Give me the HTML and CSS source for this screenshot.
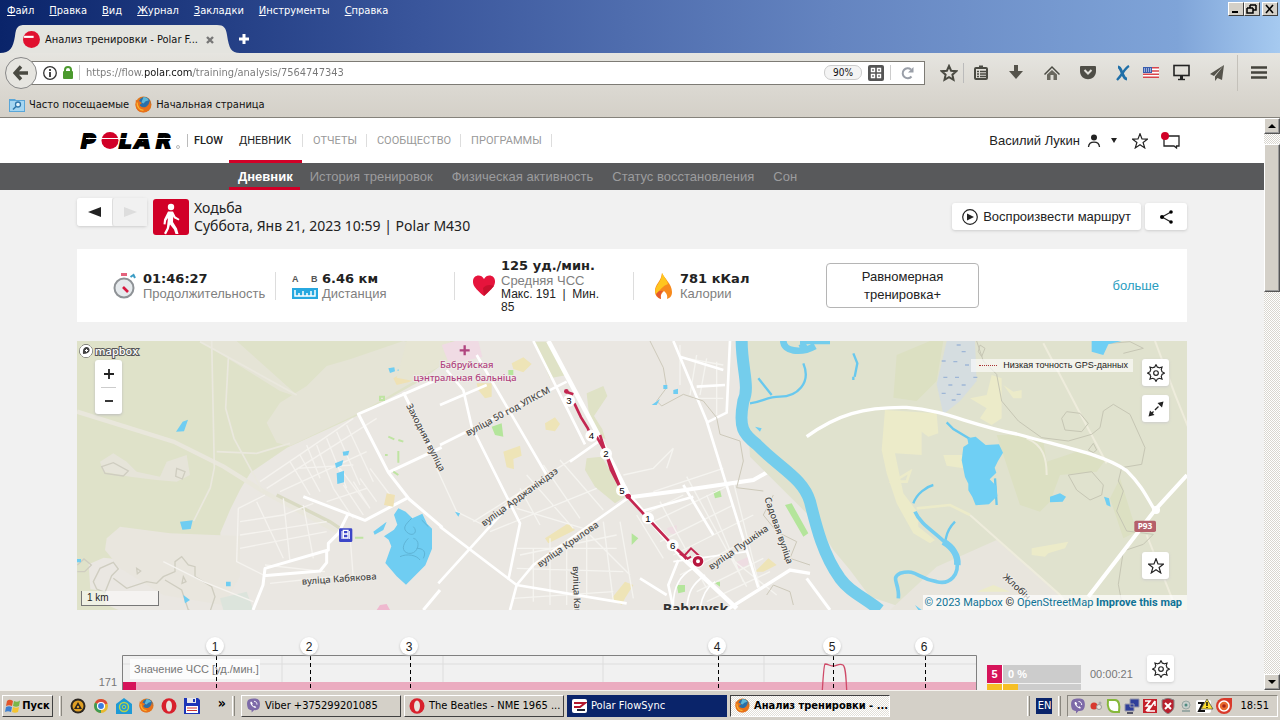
FILE: index.html
```html
<!DOCTYPE html>
<html lang="ru">
<head>
    <meta charset="UTF-8">
    <meta name="viewport" content="width=device-width, initial-scale=1.0">
    <title>Анализ тренировки - Polar Flow</title>
    <link rel="stylesheet" href="styles.css">
</head>
<body>
    <!-- icons used more than once -->
    <svg class="defs" aria-hidden="true">
        <symbol id="i-star" viewBox="0 0 16 16"><path d="M8 .8l2 5.2 5.4.1-4.3 3.4 1.6 5.4L8 11.8l-4.7 3.1 1.6-5.4L.6 6.1 6 6z" fill="none" stroke="currentColor" stroke-width="1.2"/></symbol>
        <symbol id="i-gear" viewBox="0 0 20 20"><path d="M10 .8l1.500 2.700c1 .1 1.500.3 2.200.8l3-.9-.9 3c.5.700.7 1.200.8 2.200l2.700 1.500-2.700 1.500c-.1 1-.3 1.500-.8 2.200l.9 3-3-.9c-.7.5-1.200.7-2.200.8L10 19.300l-1.500-2.600c-1-.1-1.500-.3-2.200-.8l-3 .9.9-3c-.5-.7-.7-1.200-.8-2.200L.7 10.100l2.700-1.500c.1-1 .3-1.500.8-2.200l-.9-3 3 .9c.7-.5 1.200-.7 2.200-.8z" fill="none" stroke="currentColor" stroke-width="1.300"/><circle cx="10" cy="10.100" r="2.600" fill="none" stroke="currentColor" stroke-width="1.300"/></symbol>
        <symbol id="i-firefox" viewBox="0 0 16 16"><circle cx="8" cy="8" r="7.500" fill="#e0761a"/><circle cx="9" cy="6.500" r="5.500" fill="#2a6fa8"/><path d="M8 1c2 0 4 1 5 3l-3 1-2 2-2-1z" fill="#5fb8d8"/><path d="M.8 3.500c1 1 2 1 3.200 1.500 1 .3 2.500 1 2 2.500-1 0-2 1-1 2 1.500 1.500 4 1.500 5.500.5 2-1 3-3 3-5.500 3 4-.5 10.500-5.500 10.800C3 15.500.500 12 .500 8z" fill="#e8701a"/><path d="M2 6c0 5 3 7 6 7.500" fill="none" stroke="#fbb52c" stroke-width="1.200"/></symbol>
        <symbol id="i-opera" viewBox="0 0 16 16"><ellipse cx="8" cy="8" rx="7.500" ry="7.800" fill="#d8202c"/><ellipse cx="8" cy="8" rx="3" ry="5.600" fill="#e8e4de"/></symbol>
        <symbol id="i-viber" viewBox="0 0 16 16"><path d="M3 1.500c3-1.300 8-1.300 10 0 2.500 1.500 2.500 8.500 0 10.500-1 .8-3 1-4.500 1L6 15.500V13c-2-.2-3.500-.8-4-2C.800 8 .500 3 3 1.500z" fill="#7d6aa8"/><path d="M5 4c-1 1 0 3 1.500 4.500S10 11 11 10l-1.500-1.700-1 .7C7.500 8.500 7 7.500 6.500 6.700l.7-.9L6 4z" fill="#fff"/><path d="M8.500 3.500c2 0 3.200 1.500 3.200 3.500" fill="none" stroke="#fff"/></symbol>
    </svg>

    <header class="browser">
        <div class="titlebar">
            <nav class="menubar">
                <button><u>Ф</u>айл</button>
                <button><u>П</u>равка</button>
                <button><u>В</u>ид</button>
                <button><u>Ж</u>урнал</button>
                <button><u>З</u>акладки</button>
                <button><u>И</u>нструменты</button>
                <button><u>С</u>правка</button>
            </nav>
            <div class="winbuttons">
                <button aria-label="Свернуть"><svg width="12" height="10"><path d="M2 8h6" stroke="#000" stroke-width="2"/></svg></button>
                <button aria-label="Восстановить"><svg width="12" height="10"><path d="M4 1h6M4 1v3M10 1v5H7M1 4h6M1 4v5h6V4" fill="none" stroke="#000" stroke-width="1.500"/></svg></button>
                <button class="win-close" aria-label="Закрыть"><svg width="12" height="10"><path d="M2 1l7 8M9 1L2 9" stroke="#000" stroke-width="1.600"/></svg></button>
            </div>
        </div>
        <div class="tabs">
            <div class="tab">
                <svg class="tab-bg" viewBox="0 0 240 29" width="240" height="29"><path d="M0 29C10 29 13 24 15 12 16 3 18 1 25 1h192c7 0 9 3 10 10 2 13 4 18 13 18z" fill="#e4e4df"/></svg>
                <svg width="17" height="17" viewBox="0 0 16 16"><circle cx="8" cy="8" r="8" fill="#e0102f"/><path d="M1 5.500h9" stroke="#fff" stroke-width="2"/></svg>
                <span class="tab-title">Анализ тренировки - Polar F...</span>
                <button aria-label="Закрыть вкладку"><svg width="8" height="8"><path d="M1 1l6 6M7 1L1 7" stroke="#777" stroke-width="2.400"/></svg></button>
            </div>
            <button class="newtab" aria-label="Новая вкладка"><svg width="12" height="12"><path d="M6 1v10M1 6h10" stroke="#fff" stroke-width="3"/></svg></button>
        </div>
        <div class="toolbar">
            <button class="back" aria-label="Назад"><svg width="16" height="16"><path d="M8 1.500L2 8l6 6.500M2.500 8H15" fill="none" stroke="#4a4a42" stroke-width="3.400"/></svg></button>
            <div class="urlbar">
                <svg width="14" height="14"><circle cx="7" cy="7" r="6.300" fill="none" stroke="#333" stroke-width="1.300"/><path d="M7 6v5M7 3v2" stroke="#333" stroke-width="1.800"/></svg>
                <svg width="10" height="13"><path d="M2 6V4c0-4 6-4 6 0v2" fill="none" stroke="#4c9a2e" stroke-width="2"/><rect y="5" width="10" height="8" rx="1" fill="#4c9a2e"/></svg>
                <i class="vline"></i>
                <input type="text" aria-label="Адрес" value="https://flow.polar.com/training/analysis/7564747343">
                <span class="zoom">90%</span>
                <svg width="16" height="16"><rect width="16" height="16" rx="2" fill="#555"/><path d="M3.500 3.500h3v3h-3zM9.500 3.500h3v3h-3zM3.500 9.500h3v3h-3zM9.500 9.500h3v3h-3z" fill="none" stroke="#fff" stroke-width="1.400"/></svg>
                <i class="vline"></i>
                <svg class="reload" width="14" height="14"><path d="M10.500 10.500A5 5 0 1 1 10 3.500" fill="none" stroke="#9a9fa8" stroke-width="2"/><path d="M7 6.500h5.500V1z" fill="#9a9fa8"/></svg>
            </div>
            <div class="tools">
                <button class="t-star" aria-label="Добавить в закладки"><svg width="18" height="18" viewBox="0 0 18 18"><path d="M9 2l2.100 4.700 5.100.5-3.800 3.500 1.100 5.100L9 13.200l-4.500 2.600 1.100-5.100L1.800 7.200l5.100-.5z" fill="none" stroke="#4a4a42" stroke-width="2"/></svg></button>
                <button aria-label="Закладки"><svg width="14" height="16"><rect x="1" y="3" width="12" height="11" rx="1" fill="none" stroke="#4a4a42" stroke-width="2"/><path d="M5 1.500h4" stroke="#4a4a42" stroke-width="2"/><path d="M3 6.500h2M6 6.500h6M3 9h2M6 9h6M3 11.500h2M6 11.500h6" stroke="#4a4a42" stroke-width="1.500"/></svg></button>
                <button aria-label="Загрузки"><svg width="14" height="15"><path d="M5 0h4v6h5l-7 8-7-8h5z" fill="#55534b"/></svg></button>
                <button aria-label="Домой"><svg width="16" height="16"><path d="M0 9L8 1l8 8-1 1-7-7-7 7z" fill="#4a4a42"/><path d="M3 9.500L8 5l5 4.500V15H9.500v-5h-3v5H3z" fill="#6a685f"/></svg></button>
                <button aria-label="Pocket"><svg width="16" height="15"><path d="M1 1h14q1 0 1 1v4c0 11-16 11-16 0V2q0-1 1-1z" fill="#4f4e47"/><path d="M4.500 5L8 8.500 11.500 5" fill="none" stroke="#e2e0da" stroke-width="2"/></svg></button>
                <button class="t-x" aria-label="Дополнение"><svg width="14" height="16"><path d="M2 2c4 0 4 12 9 12" fill="none" stroke="#1f6fa8" stroke-width="3"/><path d="M13 1C9 3 6 10 1 15" fill="none" stroke="#1f6fa8" stroke-width="2.400"/></svg></button>
                <button class="t-flag" aria-label="Язык"><svg width="16" height="11"><rect width="16" height="11" fill="#fff"/><path d="M0 .8h16M0 4h16M0 7.200h16M0 10.300h16" stroke="#d8454c" stroke-width="1.500"/><rect width="9" height="6" fill="#3a5dae"/><path d="M1 2h7M1 4h7" stroke="#fff" stroke-dasharray="1 1"/></svg></button>
                <button class="t-screen" aria-label="Экран"><svg width="17" height="17"><rect x="1" y="1.500" width="15" height="10" fill="none" stroke="#222" stroke-width="1.600"/><path d="M8.500 12v3" stroke="#222" stroke-width="3"/><path d="M5 15.500h7" stroke="#222" stroke-width="1.400"/></svg></button>
                <button class="t-send" aria-label="Отправить"><svg width="14" height="16"><path d="M14 0L0 9l4 2zM14 0L5 11.500V16l2.500-3 4.500 2z" fill="#55534b"/></svg></button>
                <button class="t-menu" aria-label="Меню"><svg width="16" height="13"><path d="M0 1.500h16M0 6.500h16M0 11.500h16" stroke="#44433c" stroke-width="2.600"/></svg></button>
            </div>
        </div>
        <div class="bookmarks">
            <a href="#"><svg width="16" height="14"><path d="M0 1h6l1 1h9v12H0z" fill="#5aa6d8"/><rect x="1" y="3" width="14" height="10" fill="#a5d6f2"/><circle cx="9" cy="6.500" r="2.500" fill="#e4f4fc" stroke="#2f77ac" stroke-width="1.300"/><path d="M7 8.500l-3 3" stroke="#2f77ac" stroke-width="1.600"/></svg>Часто посещаемые</a>
            <a href="#"><svg width="17" height="17"><use href="#i-firefox"/></svg>Начальная страница</a>
        </div>
    </header>

    <div class="viewport">
        <main class="page">
            <div class="site-header">
                <div class="wrap">
                    <a class="logo" href="#" aria-label="Polar">
                        <svg width="102" height="28" viewBox="0 0 102 28">
                            <g class="logo-text"><text x="1" y="21">P</text><text x="39" y="21">L</text><text x="55" y="21">A</text><text x="76" y="21">R</text></g>
                            <circle cx="30" cy="13.500" r="8.500" fill="#d10027"/>
                            <path d="M6 11.500h89" stroke="#fff" stroke-width="1"/>
                            <circle cx="98" cy="20" r="1.500" fill="none" stroke="#999" stroke-width=".7"/>
                        </svg>
                    </a>
                    <a class="flow" href="#">FLOW</a>
                    <nav class="main-nav">
                        <a class="active" href="#">ДНЕВНИК</a>
                        <a href="#">ОТЧЕТЫ</a>
                        <a href="#">СООБЩЕСТВО</a>
                        <a href="#">ПРОГРАММЫ</a>
                    </nav>
                    <div class="user">
                        <a href="#">Василий Лукин</a>
                        <svg width="14" height="14"><circle cx="7" cy="3.500" r="3" fill="#222"/><path d="M1.500 13c.5-6.500 10.500-6.500 11 0" fill="none" stroke="#222" stroke-width="1.300"/></svg>
                        <svg class="caret" width="6" height="5"><path d="M0 0h6L3 5z" fill="#222"/></svg>
                        <svg class="fav" width="16" height="16"><use href="#i-star"/></svg>
                        <svg width="19" height="18"><path d="M3 4h15v10h-2.500v2L13 14H3z" fill="none" stroke="#222" stroke-width="1.300"/><circle cx="4" cy="4" r="4" fill="#d10027"/></svg>
                    </div>
                </div>
            </div>
            <nav class="sub-nav">
                <div class="wrap">
                    <a class="active" href="#">Дневник</a>
                    <a href="#">История тренировок</a>
                    <a href="#">Физическая активность</a>
                    <a href="#">Статус восстановления</a>
                    <a href="#">Сон</a>
                </div>
            </nav>

            <div class="wrap session-head">
                <div class="pager">
                    <button aria-label="Назад"><svg width="13" height="10"><path d="M13 0v10L0 5z" fill="#222"/></svg></button>
                    <button class="off" aria-label="Вперед" disabled><svg width="13" height="10"><path d="M0 0v10l13-5z" fill="#ddd"/></svg></button>
                </div>
                <svg class="sport" width="36" height="36"><rect width="36" height="36" rx="3" fill="#d10027"/><circle cx="18" cy="8" r="3.200" fill="#fff"/><path d="M15 12.500h5l2.500 5 4 2.500-.8 1.600-4.700-2.400-.8-1.600-.2 5.400 4 6.500 1.500 5.500h-3l-1.500-4.500-4-5-1.200 4.500-2.800 5.500-2-1.200 2.800-5.300L15 19l-1.800 2.500-.7 4-2-.3.500-4.700z" fill="#fff"/></svg>
                <div class="session-title">
                    <div>Ходьба</div>
                    <div>Суббота, Янв 21, 2023 10:59 | Polar M430</div>
                </div>
                <div class="actions">
                    <button><svg width="16" height="16"><circle cx="8" cy="8" r="7.300" fill="none" stroke="#222" stroke-width="1.200"/><path d="M5 4.500v7L12 8z" fill="#222"/></svg>Воспроизвести маршрут</button>
                    <button class="share" aria-label="Поделиться"><svg width="15" height="14"><path d="M12 2L3 7l9 5" fill="none" stroke="#222" stroke-width="1.200"/><circle cx="12" cy="2" r="1.800"/><circle cx="3" cy="7" r="2"/><circle cx="12" cy="12" r="1.800"/></svg></button>
                </div>
            </div>

            <section class="wrap summary">
                <div class="stat">
                    <svg width="26" height="28" viewBox="0 0 26 28"><path d="M8 1h6v3H8z" fill="#e4627c"/><path d="M17.500 5l3-2 1.500 3" fill="none" stroke="#3a9cc4" stroke-width="2"/><circle cx="11" cy="16" r="9.500" fill="#e6eaed" stroke="#8e9296" stroke-width="2"/><path d="M10 15l5 5" stroke="#d8173f" stroke-width="2.600"/></svg>
                    <div><strong>01:46:27</strong><span>Продолжительность</span></div>
                </div>
                <div class="stat">
                    <svg width="26" height="28" viewBox="0 0 26 28"><text class="ab" x="0" y="10">A</text><text class="ab" x="19" y="10">B</text><rect y="16" width="26" height="11" fill="#27a8e0"/><path d="M3 18v6h20v-6M7 24v-3M11 24v-5M15 24v-3M19 24v-5" fill="none" stroke="#fff" stroke-width="1.500"/></svg>
                    <div><strong>6.46 км</strong><span>Дистанция</span></div>
                </div>
                <div class="stat">
                    <svg width="26" height="28" viewBox="0 0 26 28"><path d="M13 24C2 15 2 12 2 9c0-6 8-8 11-2 3-6 11-4 11 2 0 3 0 6-11 15z" fill="#e6143c"/><path d="M13 24l10-10c-5-2-8-1-11 2z" fill="#c8102e"/></svg>
                    <div><strong>125 уд./мин.</strong><span>Средняя ЧСС</span><em>Макс. 191 &nbsp;|&nbsp; Мин. 85</em></div>
                </div>
                <div class="stat">
                    <svg width="26" height="28" viewBox="0 0 26 28"><path d="M12 1c2 5 10 11 10 19 0 4-2 6-5 7 1-4-1-6-3-8-2 2-4 4-3 8-4-1-6-4-6-8 0-7 6-9 7-18z" fill="#f78a1d"/><path d="M12 1c2 4 5 7 6 11-5 2-9 6-12 11-3-9 6-12 6-22z" fill="#ffc61e"/><path d="M6 22c2-3 5-4 7-3-2 2-3 4-2 8-2-1-4-2-5-5z" fill="#e4572e"/></svg>
                    <div><strong>781 кКал</strong><span>Калории</span></div>
                </div>
                <button class="benefit">Равномерная тренировка+</button>
                <a class="more" href="#">больше</a>
            </section>

            <section class="wrap map">
                <svg class="map-canvas" viewBox="21 18 3330 807" preserveAspectRatio="xMidYMid slice">
                    <rect x="21" y="18" width="3330" height="807" fill="#eae7e2"/>
                    <!-- west: woods and suburbs -->
                    <g>
                        <path d="M21 18h1180l-70 60-80 60-180 100-220 100-110 75-30 50-30 60-30 70v80l-200 10-150-15-45 20 5 75 45 5v40l300 130 80 15H21z" fill="#dfe2c9"/>
                        <path d="M1000 18l110 30-60 80-180 105-210 100-40-10-30-60 40-60 80-50 60-60 70-20zM390 18h110l190 170-60-20z" fill="#e5e4d6"/>
                        <path d="M90 380l40-25 40 25 30 30 70 15 20-45 60-20 10 60-40 20-60-5-80-10-80-15z" fill="#e6e4d9"/>
                        <path d="M110 610l40-35 150 20 210 8v120L460 810 280 780l-130-80-45-55z" fill="#e9e6de"/>
                        <path d="M450 790l80-20 20 55H460z" fill="#dce4dc"/>
                        <path d="M21 230l290 90 150 75 120 75 220 120" fill="none" stroke="#e9e7dc" stroke-width="13"/>
                        <path d="M425 18l8 380-12 60-50 100M475 70l-8 150 25 90 65 120 20 40M390 20l290 160M440 350l120 5 100-30" fill="none" stroke="#eae8de" stroke-width="5"/>
                        <path d="M620 480l160 80 30 20" fill="none" stroke="#d9dac3" stroke-width="10"/>
                        <path d="M95 395l35-12 45 25-15 15-55-8zM320 400l25 10-8 22-20-8zM70 740l20-40 40-18 15 20-20 20-20 50-25-10zM130 730l40 30 60-20 30 5 20-20 35-15v-30l20-15 20 25 20 5v30l50 30 10 30-20 60-60-20-20-60-50-30M22 690l20-18 22 18-20 20-22 0M200 700l12 8-10 8zM340 725l8 15-12 5z" fill="none" stroke="#cfcdc0" stroke-width="4"/>
                        <g fill="none" stroke="#f5f3ef" stroke-width="4">
                            <path d="M505 520l-5 160 80 40M510 560l130-20 90-35M510 600l260-40M510 640l260-50M640 490l20 190M560 500l80 170M700 510l30 160M585 690l180 20M600 745l240-25M840 600l10 130M505 520l80-40"/>
                            <path d="M570 440l280-190M590 460l330-210M630 470l260-120M740 330l50 130M770 310l60 150M800 290l70 160M830 270l80 170M690 360l60 110M790 460l60 90M820 450l60 90M850 440l50 80M870 430l50 70M900 400l60 80M770 500l120-40M680 400l170-10M900 520l-90-120M660 380l60 100M710 330l40 100"/>
                            <path d="M280 680l120 60 150 60"/>
                        </g>
                        <path d="M1110 130L865 237l90 175 62 80 100 85M1010 490L885 556 700 485M955 412l160-75M835 535l-30 60-30 30v20l-190 55-6 50-30 75M580 722l170-14 20-25v-40M1000 172l90 180M1060 825l50-60" fill="none" stroke="#fff" stroke-width="9" stroke-linejoin="round"/>
                        <path d="M970 130l50-30 50-20 10 20-60 40-40 10zM950 475l25 5-5 35-28-5z" fill="#efe1b4"/>
                        <path d="M930 185h12v10h-12zM955 305l18 8M985 315l15 5M945 360h8M985 348v35M970 410l15 10M855 608h25" fill="none" stroke="#bfe4a2" stroke-width="6"/>
                        <path d="M955 100l18-3 2 12-15 5zM980 105l25-5-10 12zM318 290l20-30 16-6-12 35zM330 560l38-4-6 26-25 2zM818 350l20-3-4 14-14 1zM795 385l25-10-4 16-18 8zM800 415l22-8v35l-20 5zM910 590l40-30-10 25-26 14zM468 740h14v14h-14zM340 780l20 15-15 10zM21 672h12v10H21z" fill="#6fcdf2"/>
                        <path d="M985 520l22 10 20 20 30-14 14 30 15 15v60l-20 50-58 58-28-25-34-40 18-50-8-20-14-10 30-20 10-15-10-30z" fill="#6fcdf2"/>
                        <path d="M1025 550c-20 20-30 30-10 45 15 10 30-5 15-20M1015 610c-20 20-20 40 0 45 30 5 40-40 15-45M990 665c20-10 50-5 60 10M1040 640c20 0 30 10 20 30M1055 555l20 20" fill="none" stroke="#5fb4d6" stroke-width="3"/>
                        <rect x="807" y="580" width="40" height="41" rx="4" fill="#3c46c8"/>
                        <path d="M816 588v24M838 588v24" stroke="#fff" stroke-width="3"/><path d="M820 586h14v23h-14zM822 597h12" fill="none" stroke="#fff" stroke-width="4"/>
                    </g>
                    <!-- town -->
                    <g transform="translate(1110 0)">
                        <path d="M-100 18h130l20 50-40 20-90 50-50-10z" fill="#e6e5d3"/>
                        <path d="M5 30l40-12 70 0 12 48-100 20z" fill="#f0dbe4"/>
                        <path d="M440 175l50-22 12 30-40 60 25 40 10 30-30-15-20-60zM440 370l45-5 30 50 40 70-30 20-60-50-30-50zM280 20h50l50 100-50 10z" fill="#dfe2c6"/>
                        <path d="M215 85l35-18 25 20-25 25-30-10zM110 145l45 0v40l-20 5-20-25zM315 265l30-18 15 20-15 22-28-5zM190 350l50-18 5 30-25 10 2 30-22-5zM315 610l70-45 20 20-80 40zM515 790l40-50 25 10-25 40-10 20zM945 710l40-40 25 20-40 20z" fill="#eee4b7"/>
                        <path d="M155 275l30-10 5 40-25-5zM205 105h15v15h-15zM575 595l20 15-20 20zM820 740l20 0v15zM710 750l25 0v20l-20 5zM1035 510l20-5 50 90-15 10zM820 470l20-5 5 20-20 5z" fill="#b4e59b"/>
                        <path d="M890 680l35-15v25l-30 10zM680 580l30-10v30l-20-5z" fill="#eedde2"/>
                        <g fill="none" stroke="#f5f4f0" stroke-width="4">
                            <path d="M100 560l300-190M150 590l320-130M260 420l140 160M310 390l110 160M360 375l130 150M230 520l200 60M160 540l80-70M240 460l60 110M240 660l290-60M230 700l320 10M230 640l300 0M280 640v160M330 610v200M380 640v170M440 590v200M490 560l30 240M540 560l40 230M220 790l300-20M450 600l120 120M590 540l80 130M-10 400l60 130 80 40"/>
                            <path d="M700 340l-60 60-90 20M700 340l-20 60M610 540l120-60M640 470l210-70M740 425l180 330M660 500l140 260M800 480l110 260M880 440l80 320M640 560l230-110M660 620l220-110M700 660l240-120M720 720l230-120M770 770l200-100M800 800l190-90M860 660l150 120M720 30v120M770 60l-20 120M800 70l-20 110M830 80v160M760 190h90M740 70l110 20"/>
                        </g>
                        <path d="M760 700c-40 20-60 60-60 110M795 720c-40 30-50 50-55 100M825 740c-30 20-40 50-45 80M700 680l220-30" fill="none" stroke="#fff" stroke-width="5"/>
                        <g fill="none" stroke="#fff" stroke-width="8" stroke-linejoin="round">
                            <path d="M140 150L0 210M0 330l340-170 40-20M20 105l50 60 25 110 145 290-35 170M110 60l210 360M280 18l155 310M0 575l230 175 330 55M210 825l20-75 50-60 290-205M390 380l85-60M-5 745L240 475M700 18l100 240 155 500M870 18l-10 215-60 30M600 530l160-45M730 450l90 150M600 730l80 50M700 820l-15-70 30-75M720 65l130 40M770 155l85-5"/>
                        </g>
                        <path d="M325 18L475 300l90 180 165 190 160 150" fill="none" stroke="#fff" stroke-width="14"/>
                        <path d="M570 487l150-20 220-32 80-45 90-75" fill="none" stroke="#fff" stroke-width="12"/>
                        <path d="M860 825l190-120 60 10" fill="none" stroke="#fff" stroke-width="10"/>
                        <path d="M630 18l40 80 10 60-30 40 15 15 65-35 60 20 40 50 10 50 60 20 10 60-20 80 80 10M1000 480l-30 60 40 50 60 30-20 50 60 20M980 780l20-30 50 20 10 40" fill="none" stroke="#cdc9ba" stroke-width="3"/>
                        <path d="M635 210l25-18-10 18zM670 150h12v12h-12zM700 165l14-4v16h-14zM45 530l15 5-5 10z" fill="#6fcdf2"/>
                    </g>
                    <!-- river and east bank -->
                    <g transform="translate(2220 0)">
                        <path d="M-200 18h1331v807H300l-120-40-60-80-50-60-50-80-200-200z" fill="#e0e2ce"/>
                        <path d="M240 825l140-130 180-80 100 80 140 130z" fill="#e8e5dd"/>
                        <path d="M260 60l100-42h40l-20 120-60 60-70-10zM560 300l60 0 80 20 10 60 90-30 90 20-30 40-110 10-30 80-30 30-60-20-20-60zM930 430l-30 60 40 120 40-20z" fill="#dce0c2"/>
                        <path d="M410 18h85l5 120-50 60-50 40-20-90z" fill="#d5dde0"/>
                        <path d="M440 30h12M455 50h12M395 78h12M430 80h12M465 90h12M400 127h12M435 127h12M490 127h12M415 150h12M455 150h12M395 175h12M440 178h12M425 195h12" stroke="#9eb6d6" stroke-width="4"/>
                        <path d="M480 190l50-10 15-60 30 10v120l-30 20-35-20 20-30zM580 150l30 20 25-5v25h-25zM225 225l155 10 5 60-30 10-20-15v70l-80-5 25 120 45 60 0 40 50 40-15 10-50-30-50-90-30-90-15-70zM400 360l60 0v40l-50-8zM665 640l110-20-10 20-50 15-10 10-40-5zM500 770l50-20 50 20z" fill="#ecebc9"/>
                        <path d="M250 440l50-30-10 30zM320 520l100-10 60 30" fill="none" stroke="#ecebc9" stroke-width="8"/>
                        <path d="M480 540l270 240 30 50M650 310c50 20 60 60 60 110M700 25l110 210 80 150M1035 18l60 160 40 100M1010 600l80 200" fill="none" stroke="#eeecdc" stroke-width="6"/>
                        <path d="M500 18l20 60 40 40 15 80 50 60 70 50 80 10 70-20 25-20 10-50 30-20 50 30 45 100-10 50-60 10-10 40 15 30-20 60 30 60 80 10-30 30-60 20-15 100 15 80M755 250l15-20 40 5 25 30-20 25-50-5zM775 420l70-10 35 40-5 30-35 15-40-30zM835 345l15-20 10 20-10 8zM510 30l15 10-10 25-10-15zM900 25l60-5 40 20-60 15" fill="none" stroke="#c6c6b4" stroke-width="3"/>
                        <path d="M-205 18c0 80 25 140 5 180-15 80 0 100 40 130C-90 400-20 430 0 500c20 80 40 160 90 230 30 40 60 50 120 95" fill="none" stroke="#74cdec" stroke-width="36"/>
                        <path d="M-30 18h90M-80 18c0 30 50 40 95 15M-10 30l-20 10" fill="none" stroke="#74cdec" stroke-width="20"/>
                        <path d="M-20 85c25 60-20 100-70 100-40 0-50 15-90 20M-155 130l40 50M130 55l12 30-8 40M130 125v10M410 262l20 20 50 30M310 505c10-30 40-50 60-55M435 560c-30 30-25 50-30 60M555 430l5 80" fill="none" stroke="#68c8ee" stroke-width="7"/>
                        <path d="M315 530c20 50 100 80 125 140 10 50-20 80-60 70-60-10-60-40-110-25-30 15 0 30-5 75" fill="none" stroke="#74cdf0" stroke-width="11"/>
                        <path d="M400 620c25 15 45 40 42 70" fill="none" stroke="#74cdf0" stroke-width="20"/>
                        <path d="M472 310l25-5 30 25 40-2 12 25-15 25-10 20 5 15-20 20 20 20 3 30-25 25-40 3-10-25-12-20v-20l-10-20-10-50 5-40 15-10zM845 18h90l-40 10-15 32-35-10zM720 485l30-10 18 10-10 15-38 2zM882 485l15 5 5 25-12-5zM-165 275l20 5-5 10zM315 810l20 15h-10z" fill="#6fcff4"/>
                        <path d="M-10 305C80 240 160 215 290 217c120 10 180 50 330 80 140 40 260 60 330 110 50 50 60 80 85 120" fill="none" stroke="#fff" stroke-width="10"/>
                        <path d="M835 785l200-260 96-105" fill="none" stroke="#fff" stroke-width="12"/><circle cx="1038" cy="525" r="12" fill="#fff"/>
                        <path d="M-10 730l70 95" stroke="#fff" stroke-width="9"/>
                        <rect x="973" y="557" width="65" height="34" rx="5" fill="#b5606a"/><text class="badge" x="1005" y="583">Р93</text>
                    </g>
                    <!-- labels -->
                    <g class="labels">
                        <g class="poi"><text x="1190" y="98">Бабруйская</text><text x="1185" y="138">цэнтральная бальніца</text><path d="M1184 31v30M1169 46h30" stroke="#b0447f" stroke-width="7"/></g>
                        <text transform="translate(1193 304) rotate(-28)">вуліца 50 год УЛКСМ</text>
                        <text transform="translate(1008 212) rotate(63)">Заходняя вуліца</text>
                        <text transform="translate(696 749) rotate(-4)">вуліца Кабякова</text>
                        <text transform="translate(1242 575) rotate(-36)">вуліца Арджанікідзэ</text>
                        <text transform="translate(1410 698) rotate(-35)">вуліца Крылова</text>
                        <text transform="translate(1508 694) rotate(88)">вуліца Кам</text>
                        <text transform="translate(2083 490) rotate(71)">Садовая вуліца</text>
                        <text transform="translate(1924 706) rotate(-35)">вуліца Пушкіна</text>
                        <text transform="translate(2797 728) rotate(43)">Жлобін</text>
                        <text class="city" x="1778" y="838">Babruysk</text>
                    </g>
                    <path d="M920 825l10-15 20-3 10 18z" fill="#efb9cf"/>
                    <!-- route -->
                    <g transform="translate(1110 0)">
                        <path d="M378 170l22 8M403 205l20 42 20 32 12 28M470 305l28 50 15 50 32 62M480 300l18 55 47 112M545 467l20 20 60 65 75 80 40 40M735 665l-15-10" fill="none" stroke="#c32650" stroke-width="8"/>
                        <path d="M715 645l28 26 10-6M735 660l18-20 24 22" fill="none" stroke="#c32650" stroke-width="6"/>
                        <circle cx="379" cy="169" r="7" fill="#c32650"/><circle cx="565" cy="484" r="8" fill="#c32650"/>
                        <g fill="#fff"><circle cx="387" cy="197" r="18"/><circle cx="454" cy="302" r="18"/><circle cx="498" cy="356" r="18"/><circle cx="546" cy="466" r="18"/><circle cx="624" cy="550" r="18"/><circle cx="698" cy="631" r="18"/><circle cx="774" cy="679" r="19"/></g>
                        <circle cx="774" cy="679" r="11" fill="#fff" stroke="#b7173f" stroke-width="10"/>
                        <g class="pins"><text x="387" y="207">3</text><text x="454" y="312">4</text><text x="498" y="366">2</text><text x="546" y="476">5</text><text x="624" y="560">1</text><text x="698" y="641">6</text></g>
                    </g>
                </svg>
                <div class="mapbox">
                    <svg width="14" height="14"><circle cx="7" cy="7" r="6.300" fill="#fff" stroke="#444"/><path d="M4 10c-.5-5 1-7 4-7 4 1 4 7-4 7z" fill="#444"/><path d="M7.500 5v3M6 6.500h3" stroke="#fff"/></svg>
                    <span>mapbox</span>
                </div>
                <div class="zoomer">
                    <button aria-label="Приблизить"><svg width="10" height="10"><path d="M5 0v10M0 5h10" stroke="#222" stroke-width="1.800"/></svg></button>
                    <button aria-label="Отдалить"><svg width="10" height="10"><path d="M1 5h8" stroke="#222" stroke-width="1.800"/></svg></button>
                </div>
                <div class="scale">1 km</div>
                <div class="gps"><i></i>Низкая точность GPS-данных</div>
                <div class="map-tools">
                    <button aria-label="Настройки карты"><svg width="18" height="18"><use href="#i-gear"/></svg></button>
                    <button aria-label="Развернуть"><svg width="16" height="16"><path d="M2 14L14 2" stroke="#222" stroke-width="1.300" stroke-dasharray="5 2"/><path d="M15.500.5l-1.500 6L9.500 2zM.5 15.500l1.500-6L6.500 14z" fill="#222"/></svg></button>
                    <button class="last" aria-label="Избранное"><svg width="16" height="16"><use href="#i-star"/></svg></button>
                </div>
                <div class="attribution"><a href="#">© 2023 Mapbox</a> © <a href="#">OpenStreetMap</a> <a href="#"><b>Improve this map</b></a></div>
            </section>

            <section class="wrap chart">
                <div class="axis">171</div>
                <div class="plot">
                    <svg viewBox="0 0 855 60" preserveAspectRatio="xMinYMin slice">
                        <path d="M160 19v30M321 19v30M481 19v30M642 19v30M0 28h855" stroke="#ddd" fill="none"/>
                        <rect y="46" width="855" height="14" fill="#ebacc0"/>
                        <rect y="46" width="14" height="14" fill="#d6145a"/>
                        <path d="M700 60c1-18 2-31 3-32 4 0 4 2 8 2s6-3 10-1c3 2 3 14 4 31" fill="none" stroke="#cf4a68" stroke-width="1.300"/>
                        <rect x="8" y="23" width="130" height="20" fill="#fff" opacity=".8"/>
                        <path d="M.5 60V19.500h854V60" fill="none" stroke="#808080"/>
                        <text class="series" x="12" y="37">Значение ЧСС [уд./мин.]</text>
                        <path d="M94 20v40M188 20v40M288 20v40M596 20v40M711 20v40M803 20v40" transform="translate(.5)" stroke="#000" stroke-dasharray="4 3"/>
                        <g class="lap-bg"><circle cx="93" cy="10" r="9"/><circle cx="187" cy="10" r="9"/><circle cx="287" cy="10" r="9"/><circle cx="595" cy="10" r="9"/><circle cx="710" cy="10" r="9"/><circle cx="802" cy="10" r="9"/></g>
                        <g class="laps"><text x="93" y="15">1</text><text x="187" y="15">2</text><text x="287" y="15">3</text><text x="595" y="15">4</text><text x="710" y="15">5</text><text x="802" y="15">6</text></g>
                    </svg>
                </div>
                <div class="zones">
                    <div class="zone z5"><b>5</b><span>0 %</span></div>
                    <div class="zone z4"><b></b><span></span></div>
                </div>
                <div class="zone-time">00:00:21</div>
                <button class="chart-gear" aria-label="Настройки графика"><svg width="18" height="18"><use href="#i-gear"/></svg></button>
            </section>
        </main>
        <div class="scrollbar">
            <button aria-label="Вверх"><svg width="8" height="4"><path d="M0 4h8L4 0z"/></svg></button>
            <div class="track"><div class="thumb"></div></div>
            <button aria-label="Вниз"><svg width="8" height="4"><path d="M0 0h8L4 4z"/></svg></button>
        </div>
    </div>

    <footer class="taskbar">
        <button class="start"><svg width="16" height="15"><path d="M2 3c2-2 4-1 6 0L7 8C5 7 3 7 1 8z" fill="#e2552a"/><path d="M9 3c2 1 4 1 6-.500L14 8c-2 1-4 1-6 0z" fill="#7ab648"/><path d="M1 9c2-1 4-1 6 0l-1 5c-2-1-4-1-6 0z" fill="#3d7fd0"/><path d="M8 9c2 1 4 1 6 0l-1 5c-2 1-4 1-6 0z" fill="#f4c430"/></svg>Пуск</button>
        <i class="grip"></i>
        <div class="quick">
            <svg width="16" height="16"><circle cx="8" cy="8" r="7.500" fill="#2b2620"/><circle cx="8" cy="8" r="5.500" fill="#e0a024"/><path d="M8 4l4 7H4z" fill="#2b2620"/><circle cx="8" cy="9" r="1.200" fill="#e0a024"/></svg>
            <svg width="16" height="16"><circle cx="8" cy="8" r="7" fill="#e8b92e"/><path d="M8 8L2 4.500a7 7 0 0 1 12.500 1z" fill="#db4a3a"/><path d="M8 8v7A7 7 0 0 1 2 4.500z" fill="#3f9a54"/><circle cx="8" cy="8" r="3.500" fill="#3b7de0" stroke="#fff" stroke-width="1.200"/></svg>
            <svg width="16" height="16"><path d="M8 0l8 6v10H0V6z" fill="#1e9ad6"/><circle cx="8" cy="9" r="4.500" fill="none" stroke="#b9d24a" stroke-width="1.400"/><circle cx="8" cy="9" r="1.800" fill="none" stroke="#b9d24a"/></svg>
            <svg width="15" height="15"><use href="#i-firefox"/></svg>
            <svg width="16" height="16"><use href="#i-opera"/></svg>
            <svg width="16" height="16"><path d="M0 0h14l2 2v14H0z" fill="#1d35b8"/><path d="M3 0h9v5H3z" fill="#e6e6ea"/><path d="M9 1h2v3H9z" fill="#1d35b8"/><path d="M2 8h12v7H2z" fill="#fff"/><path d="M3 10h10M3 12.500h10" stroke="#c33"/></svg>
        </div>
        <span class="chevrons">»</span>
        <i class="grip"></i>
        <div class="tasks">
            <button><svg width="15" height="15"><use href="#i-viber"/></svg><span>Viber +375299201085</span></button>
            <button><svg width="16" height="16"><use href="#i-opera"/></svg><span>The Beatles - NME 1965 ...</span></button>
            <button class="blue"><svg width="15" height="14"><rect width="15" height="14" rx="2" fill="#fff"/><path d="M2 4h11L8 8H2" fill="none" stroke="#b3182e" stroke-width="2"/><path d="M5 11h8" stroke="#223" stroke-width="2"/></svg><span>Polar FlowSync</span></button>
            <button class="pressed"><svg width="15" height="15"><use href="#i-firefox"/></svg><span>Анализ тренировки - ...</span></button>
        </div>
        <i class="grip right"></i>
        <span class="lang">EN</span>
        <i class="grip"></i>
        <div class="tray">
            <svg width="16" height="16"><use href="#i-viber"/></svg>
            <svg width="16" height="16"><circle cx="6" cy="8" r="3.500" fill="#d83a30"/><circle cx="11" cy="9" r="2.500" fill="#e8e4de" stroke="#999"/><circle cx="12" cy="5" r="1.500" fill="#aaa"/></svg>
            <svg width="16" height="16"><path d="M2 2h7c4 0 5 5 4 12H8C3 14 1 9 2 2z" fill="#fff" stroke="#86b83a" stroke-width="2"/></svg>
            <svg width="16" height="16"><path d="M6 1h9v8H6zM1 6h9v7H1z" fill="#2f3f9a" stroke="#99a"/><path d="M3 15h6" stroke="#556" stroke-width="2"/></svg>
            <svg width="16" height="16"><rect x="1" y="1" width="14" height="14" fill="#c4202a"/><path d="M3 3h5L4 8h4l-4 5M13 3v5M13 3L6 13h7" fill="none" stroke="#fff" stroke-width="1.500"/></svg>
            <svg width="16" height="16"><path d="M8 0l6 2v6c0 4-3 6-6 8-3-2-6-4-6-8V2z" fill="#b8202e" stroke="#888"/><path d="M5 5l6 6M11 5l-6 6" stroke="#fff" stroke-width="2"/></svg>
            <svg width="16" height="16"><circle cx="8" cy="7" r="4" fill="#c8cfcc" stroke="#9aa8a4"/><circle cx="8" cy="7" r="1.500" fill="#4f8a80"/><path d="M4 13h8" stroke="#9aa8a4" stroke-width="2"/></svg>
            <svg width="18" height="16"><rect y="2" width="15" height="13" rx="2" fill="#fff"/><path d="M2 5h5l-4 8h6" fill="none" stroke="#111" stroke-width="2"/><path d="M11 1l6 10H5z" fill="#ffe02e" stroke="#554" stroke-width=".8"/><path d="M11 4v4M11 9v1" stroke="#000" stroke-width="1.400"/></svg>
            <svg width="16" height="16"><path d="M8 0h8v8a8 8 0 1 1-8-8z" fill="#d93a2b"/><circle cx="8" cy="8" r="5" fill="#e86a2c" stroke="#fff" stroke-width="1.600"/><circle cx="8" cy="8" r="1.800" fill="#a5251c"/></svg>
            <time>18:51</time>
        </div>
    </footer>
</body>
</html>
```
FILE: styles.css
```css
:root {
    --ui-font: "DejaVu Sans Condensed", "Noto Sans", sans-serif;
    --face: #d4d0c8;
    --red: #d10027;
}

* {
    box-sizing: border-box;
    margin: 0;
    padding: 0;
}

body {
    height: 100vh;
    display: flex;
    flex-direction: column;
    overflow: hidden;
    font: 13px "Liberation Sans", Arial, sans-serif;
    color: #222;
}

svg {
    flex: none;
    display: block;
}

button {
    background: none;
    border: none;
    font: inherit;
    color: inherit;
    cursor: pointer;
    display: flex;
    align-items: center;
    justify-content: center;
}

a {
    color: inherit;
    text-decoration: none;
}

.defs {
    position: absolute;
    width: 0;
    height: 0;
}

.wrap {
    width: calc(100% - 154px);
    margin: 0 auto;
}

/* browser chrome */
.browser {
    flex: none;
    font: 11px var(--ui-font);
    color: #111;
    background: linear-gradient(to right, #0a246a 0%, #3a569c 33%, #6484c0 65%, #7fa4d8 92%, #a6caf0 100%);
}

.titlebar {
    display: flex;
    justify-content: space-between;
    height: 24px;
}

.menubar {
    display: flex;
    gap: 15px;
    height: 20px;
    padding-left: 7px;
    color: #fff;
}

.winbuttons {
    display: flex;
    padding: 2px 2px 8px 0;
}

.winbuttons button {
    width: 16px;
    height: 14px;
    background: var(--face);
    border: 1px solid;
    border-color: #fff #404040 #404040 #fff;
}

.winbuttons .win-close {
    margin-left: 2px;
}

.tabs {
    display: flex;
    align-items: center;
    height: 29px;
}

.tab {
    position: relative;
    display: flex;
    align-items: center;
    gap: 5px;
    width: 238px;
    height: 29px;
    padding: 2px 0 0 23px;
}

.tab-bg {
    position: absolute;
    left: 0;
    top: 0;
}

.tab > :not(.tab-bg) {
    position: relative;
}

.tab-title {
    width: 156px;
    white-space: nowrap;
}

.newtab {
    width: 12px;
}

.toolbar {
    display: flex;
    align-items: center;
    height: 39px;
    padding-left: 5px;
    background: linear-gradient(#e6e5e0, #dad7d0);
}

.back {
    z-index: 1;
    width: 32px;
    height: 32px;
    border: 1px solid #888;
    border-radius: 50%;
    background: #e6e5e0;
}

.urlbar {
    flex: 1;
    display: flex;
    align-items: center;
    gap: 6px;
    height: 24px;
    margin-left: -8px;
    padding: 0 9px 0 13px;
    background: #fff;
    border: 1px solid #7d7b75;
}

.vline {
    width: 1px;
    height: 15px;
    background: #ccc;
}

.urlbar input {
    flex: 1;
    min-width: 0;
    border: none;
    outline: none;
    font: 11px var(--ui-font);
    color: transparent;
    background: linear-gradient(to right, #777 59px, #111 59px 107px, #777 107px);
    -webkit-background-clip: text;
    background-clip: text;
}

.zoom {
    width: 38px;
    line-height: 13px;
    font-size: 10px;
    text-align: center;
    border-radius: 7px;
    border: 1px solid #ccc;
    background: #f4f4f4;
}

.urlbar .reload {
    margin-left: 4px;
}

.tools {
    display: flex;
    align-items: center;
    padding-left: 9px;
}

.tools button {
    width: 36px;
    height: 36px;
}

.tools .t-star {
    width: 30px;
    height: 20px;
    border-right: 1px solid #bbb;
}

.tools .t-star + button {
    width: 34px;
}

.tools .t-x,
.tools .t-send {
    width: 34px;
}

.tools .t-flag {
    width: 22px;
}

.tools .t-screen {
    width: 38px;
}

.tools .t-menu {
    width: 43px;
    margin-left: 3px;
    border-left: 1px solid #c4c1ba;
}

.bookmarks {
    display: flex;
    align-items: center;
    gap: 6px;
    height: 26px;
    padding-left: 9px;
    background: linear-gradient(#dad7d0, var(--face));
    border-bottom: 1px solid #85827b;
}

.bookmarks a {
    display: flex;
    align-items: center;
    gap: 4px;
}

/* page */
.viewport {
    flex: 1;
    min-height: 0;
    display: flex;
}

.page {
    flex: 1;
    min-width: 0;
    overflow: hidden;
    background: #f1f1f1;
}

.site-header {
    background: #fff;
}

.site-header .wrap {
    display: flex;
    align-items: center;
    height: 45px;
    font: 11px Roboto, sans-serif;
}

.logo {
    padding: 0 5px 0 3px;
}

.logo-text {
    font: italic bold 20px "DejaVu Sans", sans-serif;
    stroke: #000;
    stroke-width: 2px;
}

.flow {
    width: 42px;
    padding-left: 6px;
    border-left: 1px solid #bbb;
    font-weight: 500;
}

.main-nav {
    display: flex;
    align-items: center;
    height: 45px;
    color: #999;
}

.main-nav a {
    padding: 0 9px 0 10px;
    border-right: 1px solid #ddd;
}

.main-nav .active {
    padding-right: 11px;
    line-height: 45px;
    color: #222;
    border-right: none;
    box-shadow: inset 0 -3px var(--red);
}

.main-nav .active + a {
    border-left: 1px solid #ddd;
}

.user {
    display: flex;
    align-items: center;
    gap: 7px;
    margin-left: auto;
    padding-right: 7px;
    font: 13px "Liberation Sans", Arial, sans-serif;
}

.user .caret {
    margin-left: 3px;
}

.user .fav {
    margin: 0 6px 0 8px;
}

.sub-nav {
    background: #58595b;
    color: #9c9c9e;
}

.sub-nav .wrap {
    display: flex;
    padding-left: 152px;
    line-height: 27px;
}

.sub-nav a {
    padding: 0 9px 0 10px;
}

.sub-nav .active {
    padding: 0 7px 0 9px;
    color: #fff;
    font-weight: bold;
    box-shadow: inset 0 -3px var(--red);
}

.session-head {
    display: flex;
    align-items: flex-start;
    height: 59px;
    padding-top: 8px;
}

.pager {
    display: flex;
    margin-right: 6px;
    border-radius: 3px;
    box-shadow: 0 1px 3px #ccc;
}

.pager button {
    width: 35px;
    height: 28px;
    background: #fff;
    border-radius: 3px 0 0 3px;
}

.pager .off {
    background: #f1f1f1;
    border-left: 1px solid #ddd;
}

.sport {
    margin-top: 1px;
}

.session-title {
    padding: 1px 0 0 5px;
    font: 14px/18px "Noto Sans", sans-serif;
}

.actions {
    display: flex;
    gap: 4px;
    margin: 5px 0 0 auto;
}

.actions button {
    gap: 5px;
    height: 27px;
    padding: 0 10px;
    background: #fff;
    border-radius: 3px;
    box-shadow: 0 1px 3px #ccc;
}

.actions .share {
    width: 42px;
}

.summary {
    display: flex;
    align-items: center;
    height: 73px;
    padding-left: 20px;
    background: #fff;
}

.stat {
    display: flex;
    align-items: center;
    gap: 4px;
    width: 179px;
    height: 28px;
    padding-left: 16px;
    border-right: 1px solid #ddd;
}

.stat:nth-child(4) {
    border: none;
}

.stat div {
    width: 125px;
}

.stat strong,
.stat span,
.stat em {
    display: block;
    white-space: nowrap;
}

.stat strong {
    font: bold 13px/15px "DejaVu Sans", sans-serif;
}

.stat span {
    line-height: 15px;
    color: #808080;
}

.stat em {
    width: 110px;
    font-style: normal;
    font-size: 12px;
    line-height: 13px;
    white-space: normal;
}

.ab {
    font: bold 9px "Liberation Sans", sans-serif;
    fill: #555;
}

.benefit {
    width: 153px;
    height: 45px;
    margin-left: 13px;
    padding: 0 20px;
    border: 1px solid #b5b5b5;
    border-radius: 4px;
    line-height: 18px;
}

.more {
    margin: 0 28px 0 auto;
    color: #2a9dbf;
}

/* map */
.map {
    position: relative;
    height: 269px;
    margin-top: 19px;
    overflow: hidden;
}

.map-canvas {
    width: 100%;
    height: 100%;
}

.labels {
    font: 500 28px "Noto Sans", sans-serif;
    fill: #4a4a48;
    stroke: #f0eeea;
    stroke-width: 5px;
    paint-order: stroke;
}

.poi {
    fill: #b0447f;
    text-anchor: middle;
}

.city {
    font-size: 42px;
    font-weight: bold;
    fill: #333;
}

.badge {
    font: bold 25px "Noto Sans", sans-serif;
    fill: #fff;
    text-anchor: middle;
}

.pins {
    font: 29px "Liberation Sans", sans-serif;
    text-anchor: middle;
}

.mapbox {
    position: absolute;
    left: 2px;
    top: 2px;
    display: flex;
    align-items: center;
    gap: 2px;
    font: 600 11px/15px "Open Sans", sans-serif;
    color: #fff;
    -webkit-text-stroke: 2px #555;
    paint-order: stroke;
}

.zoomer {
    position: absolute;
    left: 18px;
    top: 19px;
    width: 27px;
    padding: 0 6px;
    background: #fff;
    border-radius: 3px;
    box-shadow: 0 1px 3px #bbb;
}

.zoomer button {
    width: 15px;
    height: 27px;
}

.zoomer button + button {
    border-top: 1px solid #ccc;
}

.scale {
    position: absolute;
    left: 4px;
    bottom: 4px;
    width: 78px;
    padding-left: 5px;
    font-size: 10px;
    line-height: 14px;
    border: 1px solid #777;
    border-top: none;
    background: rgba(255, 255, 255, 0.5);
}

.gps {
    position: absolute;
    right: 54px;
    top: 18px;
    display: flex;
    align-items: center;
    gap: 6px;
    padding: 0 5px 0 8px;
    font-size: 9px;
    line-height: 13px;
    background: rgba(255, 255, 255, 0.6);
}

.gps i {
    width: 18px;
    border-top: 1px dotted #a33;
}

.map-tools {
    position: absolute;
    right: 18px;
    top: 18px;
    bottom: 31px;
    display: flex;
    flex-direction: column;
    gap: 9px;
}

.map-tools button,
.chart-gear {
    width: 27px;
    height: 27px;
    color: #222;
    background: #fff;
    border-radius: 3px;
    box-shadow: 0 1px 3px #ccc;
}

.map-tools .last {
    margin-top: auto;
}

.attribution {
    position: absolute;
    right: 0;
    bottom: 0;
    padding: 0 5px 0 1px;
    font: 11px/15px Roboto, sans-serif;
    background: rgba(255, 255, 255, 0.7);
}

.attribution a {
    color: #0f7396;
}

/* heart rate chart */
.chart {
    display: flex;
    align-items: flex-start;
    margin-top: 26px;
    color: #777;
}

.axis {
    width: 45px;
    padding: 40px 5px 0 0;
    font-size: 11px;
    text-align: right;
}

.plot {
    flex: 1;
}

.plot svg {
    width: 100%;
    height: 60px;
}

.series {
    font: 11px "Liberation Sans", sans-serif;
    fill: #777;
}

.lap-bg {
    fill: #fff;
    filter: drop-shadow(0 1px 1px #bbb);
}

.laps {
    font: 12px "Liberation Sans", sans-serif;
    fill: #222;
    text-anchor: middle;
}

.zones {
    width: 94px;
    margin: 29px 9px 0 10px;
}

.zone {
    display: flex;
    height: 18px;
    margin-bottom: 1px;
    font-size: 11px;
    font-weight: bold;
    line-height: 18px;
    color: #fff;
    background: #ccc;
}

.zone b {
    width: 16px;
    text-align: center;
    border-right: 1px solid #fff;
}

.zone span {
    padding-left: 5px;
}

.z5 b {
    background: #d6145a;
}

.z4 b,
.z4 span {
    background: #f6bf26;
}

.z4 span {
    width: 15px;
}

.zone-time {
    width: 57px;
    padding-top: 32px;
    font-size: 11px;
}

.chart-gear {
    margin: 19px 13px 0 0;
}

.scrollbar {
    flex: none;
    width: 16px;
    display: flex;
    flex-direction: column;
}

.scrollbar button,
.thumb {
    width: 16px;
    background: var(--face);
    border: 1px solid;
    border-color: #fff #555 #555 #fff;
    box-shadow: inset -1px -1px #999;
}

.scrollbar button {
    height: 16px;
}

.track {
    flex: 1;
    padding-top: 10px;
    background: repeating-conic-gradient(#fff 0 25%, #d9d6cf 0 50%) 0 0 / 2px 2px;
}

.thumb {
    height: 148px;
}

/* taskbar */
.taskbar {
    flex: none;
    display: flex;
    align-items: center;
    height: 30px;
    padding: 0 2px;
    font: 11px var(--ui-font);
    color: #000;
    background: var(--face);
    border-top: 1px solid #f4f2ee;
}

.start {
    width: 51px;
    height: 22px;
    gap: 1px;
    font-weight: bold;
    border: 1px solid;
    border-color: #fff #404040 #404040 #fff;
}

.grip {
    width: 3px;
    height: 20px;
    margin: 0 6px;
    border-left: 1px solid #fff;
    border-right: 1px solid #8a877f;
}

.quick {
    display: flex;
    align-items: center;
    gap: 7px;
    padding-left: 2px;
}

.chevrons {
    width: 26px;
    text-align: right;
    font-size: 14px;
    font-weight: bold;
    line-height: 14px;
    padding-bottom: 6px;
}

.tasks {
    flex: 1;
    display: flex;
    gap: 3px;
    max-width: 649px;
}

.tasks button {
    flex: 1;
    min-width: 0;
    height: 22px;
    gap: 4px;
    padding: 0 4px;
    justify-content: flex-start;
    white-space: nowrap;
    border: 1px solid;
    border-color: #fff #404040 #404040 #fff;
}

.tasks .blue {
    color: #fff;
    background: #0a246a;
    border-color: #0a246a;
}

.tasks .pressed {
    font-weight: bold;
    border-color: #404040 #fff #fff #404040;
    background: repeating-conic-gradient(#fff 0 25%, #e2dfd8 0 50%) 0 0 / 2px 2px;
}

.grip.right {
    margin-left: auto;
}

.lang {
    width: 16px;
    line-height: 16px;
    text-align: center;
    color: #fff;
    background: #0a246a;
}

.tray {
    display: flex;
    align-items: center;
    gap: 2px;
    height: 22px;
    padding: 0 8px 0 2px;
    border: 1px solid;
    border-color: #8a877f #fff #fff #8a877f;
}

.tray time {
    margin-left: 6px;
}
```
